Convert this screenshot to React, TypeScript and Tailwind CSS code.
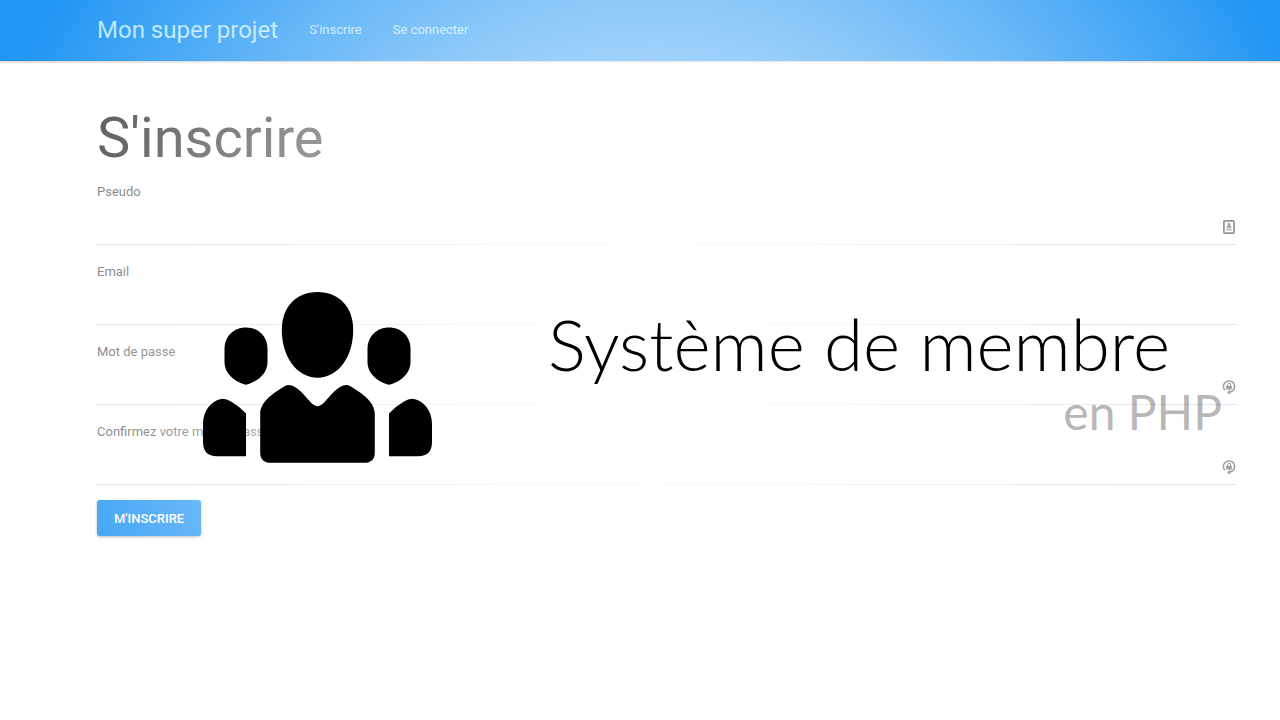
import type { ReactNode } from "react";

type Field = { id: string; label: string; type: string; icon?: ReactNode };

function IdentityIcon() {
  return (
    <svg viewBox="0 0 16 16" className="size-4" aria-hidden="true">
      <rect x="2.9" y="1.9" width="10.2" height="12.2" rx="0.8" fill="#fff" stroke="#808080" strokeWidth="1.7" />
      <circle cx="8" cy="5.4" r="1.3" fill="#858585" />
      <path d="M5.6 8.8c0-1.800 1-2.300 2.400-2.300s2.400.5 2.400 2.300z" fill="#858585" />
      <path d="M5.200 9.800h5.600v1.700h-5.600z" fill="#aaa" />
    </svg>
  );
}

function PasswordIcon() {
  return (
    <svg viewBox="0 0 16 16" className="size-4" aria-hidden="true">
      <path d="M3.900 11.300A5.600 5.600 0 1 1 12.200 11.200Q11 12.900 8.800 13.100" fill="none" stroke="#8a8a8a" strokeWidth="1.5" />
      <path d="M6 13.200l3.200-2.500v5z" fill="#8a8a8a" />
      <rect x="5.200" y="6.800" width="5.600" height="3.800" rx="0.4" fill="#8a8a8a" />
      <path d="M6.400 7V5.900a1.600 1.600 0 0 1 3.200 0v1.100" fill="none" stroke="#8a8a8a" strokeWidth="1" />
    </svg>
  );
}

function PeopleIcon() {
  return (
    <svg viewBox="0 0 230 172" className="h-[172px] w-[230px]" fill="#000" aria-hidden="true">
      <path d="M114.500 0C136 0 150.200 15 150.200 38C150.200 65 135 85.700 114.500 85.700C94 85.700 78.800 65 78.800 38C78.800 15 93 0 114.500 0Z" />
      <path d="M43 35.500C55 35.500 64.500 44 64.500 57V70C64.500 82 54 90 43 92.700C32 90 21.500 82 21.500 70V57C21.500 44 31 35.500 43 35.500Z" />
      <path d="M186 35.500C198 35.500 207.500 44 207.500 57V70C207.500 82 197 90 186 92.700C175 90 164.500 82 164.500 70V57C164.500 44 174 35.500 186 35.500Z" />
      <path d="M43 164.200H14Q0 164.200 0 150V132C0 118 9 109 17 107.200Q22 105.800 28 109.500Q36 114 43 121.500Z" />
      <path d="M186 164.200H215Q229 164.200 229 150V132C229 118 220 109 212 107.200Q207 105.800 201 109.500Q193 114 186 121.500Z" />
      <path d="M57.200 122C57.200 110 69 102 82 94Q86.500 91.500 92 95C101 100 106 111 112 113.500Q114.500 114.800 117 113.500C123 111 128 100 137 95Q142.500 91.500 147 94C160 102 171.800 110 171.800 122V160.500Q171.800 170.800 161 170.800H68Q57.200 170.800 57.200 160.500Z" />
    </svg>
  );
}

const fields: Field[] = [
  { id: "pseudo", label: "Pseudo", type: "text", icon: <IdentityIcon /> },
  { id: "email", label: "Email", type: "email" },
  { id: "password", label: "Mot de passe", type: "password", icon: <PasswordIcon /> },
  { id: "confirm", label: "Confirmez votre mot de passe", type: "password", icon: <PasswordIcon /> },
];

export default function App() {
  return (
    <div className="relative min-h-screen overflow-hidden bg-white font-['Roboto',sans-serif]">
      <header className="flex h-[61px] items-center gap-[31px] bg-[#2196f3] pr-[43px] pb-[2px] pl-[97px] text-[13px] text-[#b3e5fc] shadow-[0_1px_2px_rgba(0,0,0,0.25)]">
        <a href="#" className="text-2xl">Mon super projet</a>
        <nav className="flex gap-[31px]">
          <a href="#">S'inscrire</a>
          <a href="#">Se connecter</a>
        </nav>
      </header>

      <main className="pt-[45px] pr-[43px] pl-[97px]">
        <h1 className="text-[56px] leading-[64px] text-[#484848]">S'inscrire</h1>
        <form className="mt-3">
          <div className="flex flex-col gap-[17px]">
            {fields.map((field) => (
              <div key={field.id} className="flex flex-col">
                <label htmlFor={field.id} className="text-[13px] leading-5 text-[#6e6e6e]">
                  {field.label}
                </label>
                <div className="flex h-[43px] items-center border-b border-[#dddddd] pt-[7px]">
                  <input id={field.id} type={field.type} className="h-full min-w-0 flex-1 bg-transparent text-[13px] outline-none" />
                  {field.icon}
                </div>
              </div>
            ))}
          </div>
          <button
            type="button"
            className="mt-[15px] h-9 rounded-[3px] bg-[#2196f3] px-[17px] pt-[2px] text-[13px] font-medium text-white shadow-[0_1px_3px_rgba(0,0,0,0.35)]"
          >
            M'INSCRIRE
          </button>
        </form>
      </main>

      <div className="pointer-events-none absolute inset-0 bg-[radial-gradient(circle_700px_at_51%_50%,#ffffff_0%,rgba(255,255,255,0)_100%)]" />

      <div className="pointer-events-none absolute inset-0 flex items-center pr-[58px] pl-[203px]">
        <div className="flex flex-1 items-start justify-between pt-[35px]">
          <PeopleIcon />
          <div className="pt-[12px] font-['Lato',sans-serif]">
            <p className="pr-[52px] text-[71px] leading-[80px] font-light text-black">Système de membre</p>
            <p className="text-right text-[48px] leading-[56px] text-black/30">en PHP</p>
          </div>
        </div>
      </div>
    </div>
  );
}
